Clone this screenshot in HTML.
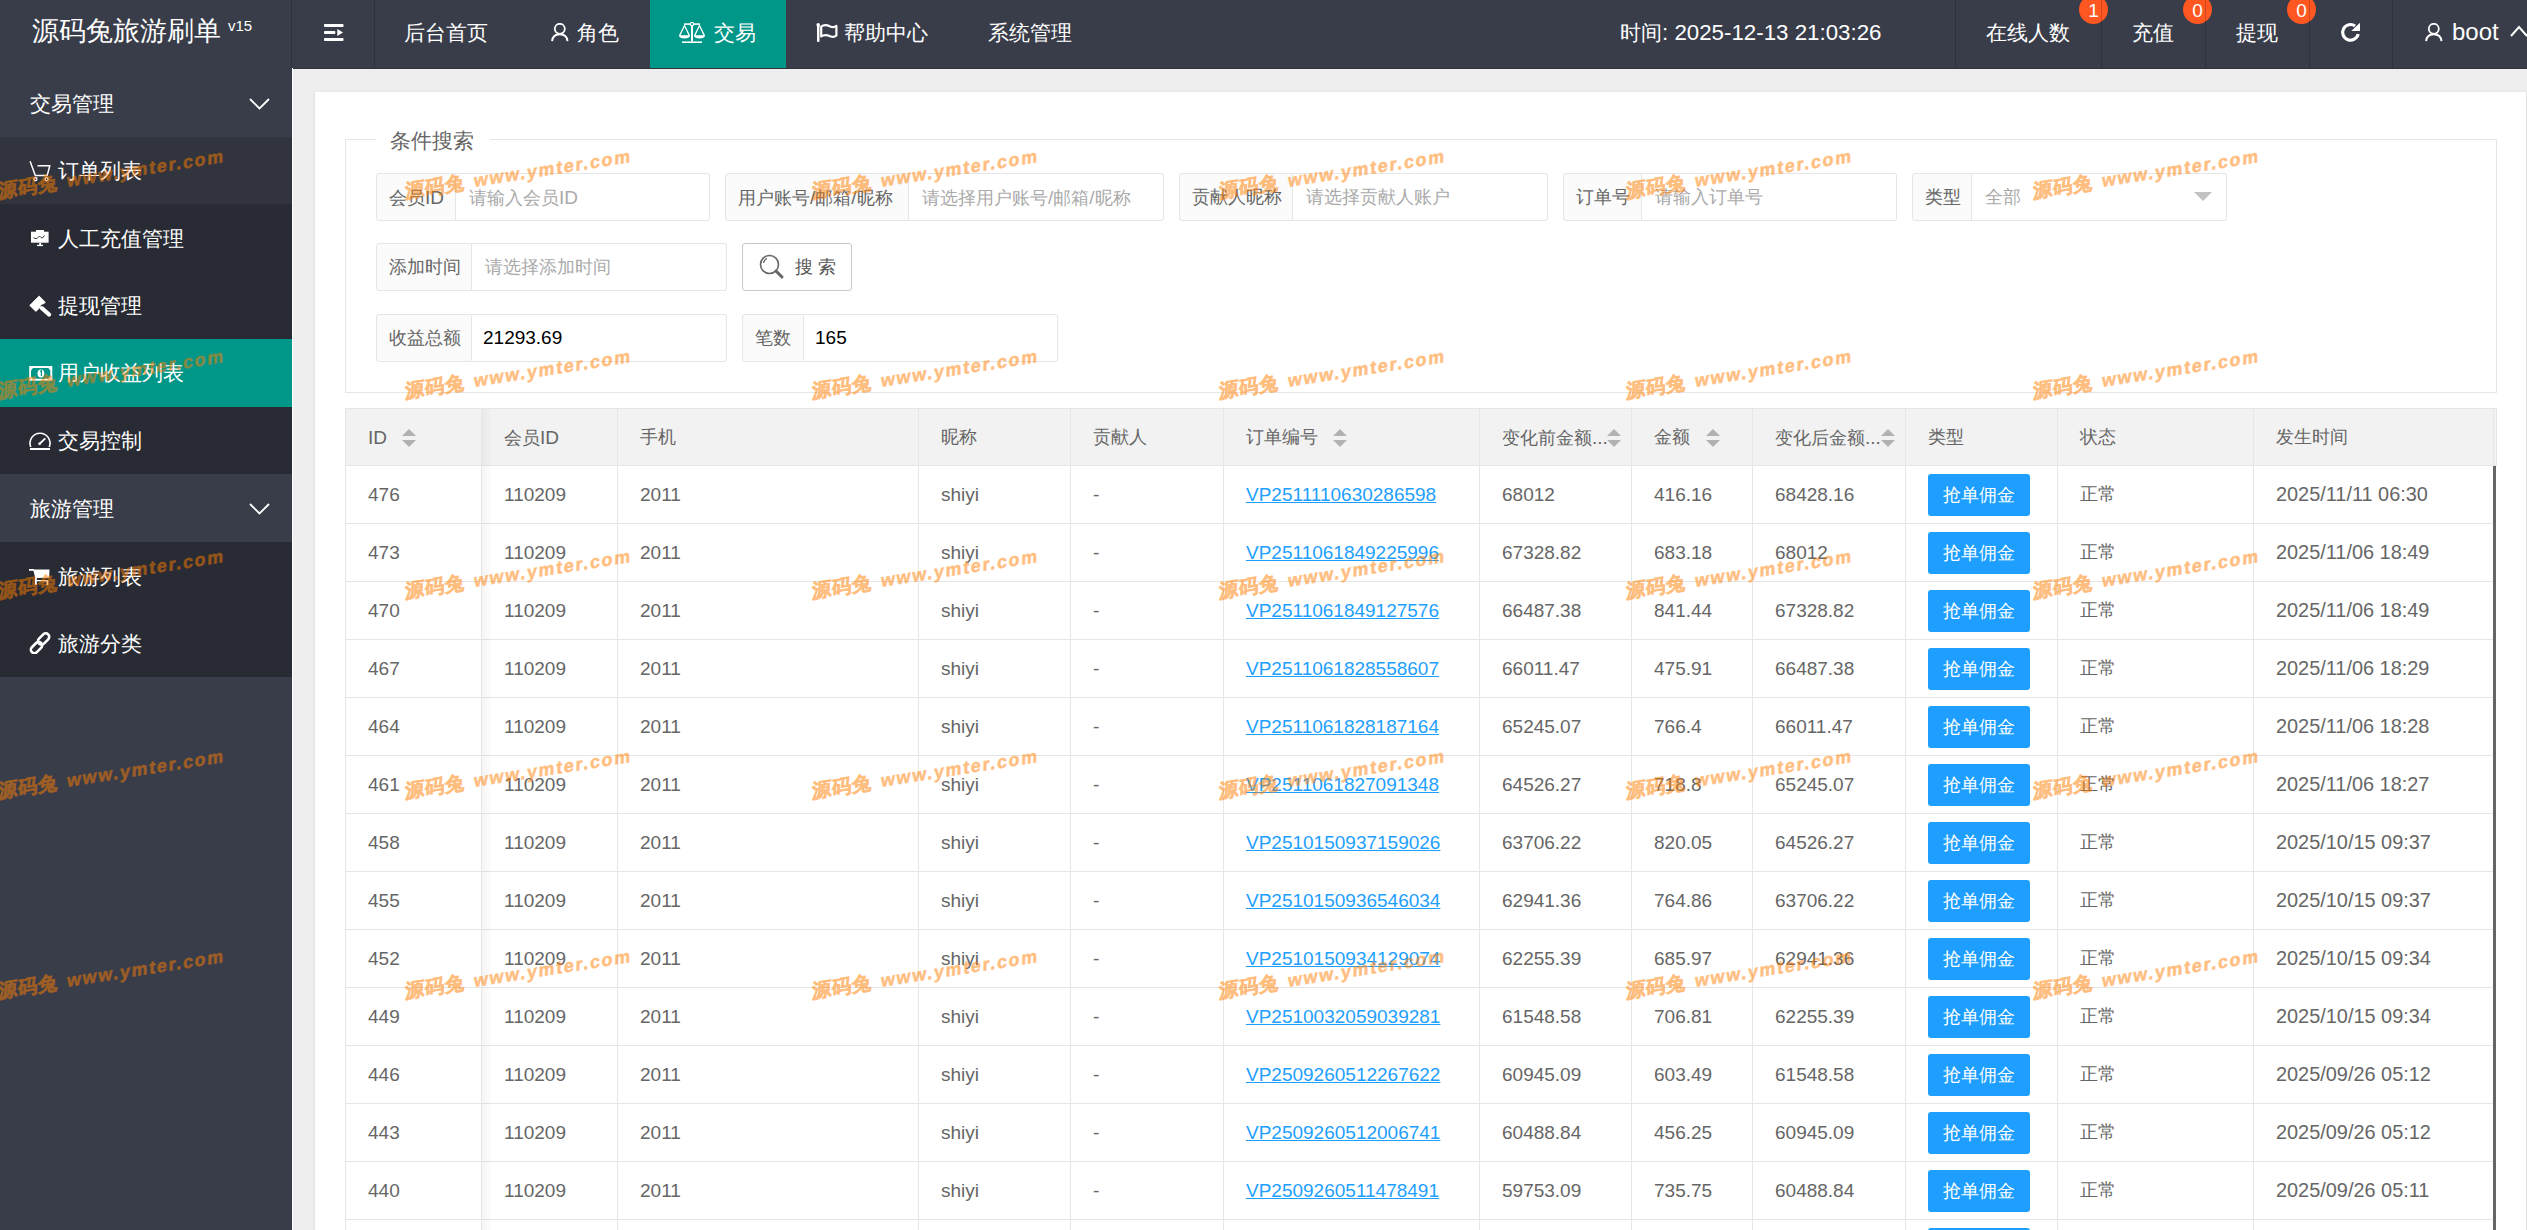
<!DOCTYPE html><html><head><meta charset="utf-8"><title>源码兔旅游刷单</title><style>

*{margin:0;padding:0;box-sizing:border-box}
html,body{width:2527px;height:1230px;overflow:hidden;background:#eeeeee;font-family:"Liberation Sans",sans-serif;}
.abs{position:absolute}
.t{position:absolute;white-space:nowrap;line-height:1}
.hdr{position:absolute;left:0;top:0;width:2527px;height:69px;background:#393d49;}
.hdr .t{color:#fff;font-size:21px}
.vsep{position:absolute;top:0;width:1px;height:68px;background:rgba(0,0,0,0.18);z-index:2}
.side{position:absolute;left:0;top:68px;width:292px;height:1162px;background:#393d49}
.side .t{color:#fff;font-size:21px}
.main{position:absolute;left:292px;top:68px;width:2235px;height:1162px;background:#eeeeee}
.card{position:absolute;left:315px;top:92px;width:2212px;height:1138px;background:#fff;box-shadow:-1px 0 3px rgba(0,0,0,0.06)}
.lbl{position:absolute;background:#fbfbfb;border:1px solid #e6e6e6;border-radius:3px 0 0 3px}
.inp{position:absolute;background:#fff;border:1px solid #e6e6e6;border-left:none;border-radius:0 3px 3px 0}
.ft{position:absolute;white-space:nowrap;line-height:1;font-size:18px}
.hl{position:absolute;height:1px;background:#e6e6e6}
.vl{position:absolute;width:1px;background:#e6e6e6}
.cell{position:absolute;white-space:nowrap;line-height:1;font-size:18px;color:#666}
.lnk{color:#1e9fff;text-decoration:underline}
.btn{position:absolute;width:102px;height:42px;background:#1e9fff;border-radius:3px;color:#fff;font-size:18px;line-height:42px;text-align:center}
.badge{position:absolute;width:29px;height:29px;border-radius:50%;background:#ff5722;color:#fff;font-size:19px;line-height:31px;text-align:center}
.wm{position:absolute;white-space:nowrap;line-height:1;color:#ff7f00;opacity:0.5;font-weight:bold;-webkit-text-stroke:0.5px #ff7f00;transform-origin:0 100%;pointer-events:none}

</style></head><body>
<div class="hdr">
<div class="t" style="left:32px;top:18px;font-size:27px">源码兔旅游刷单</div>
<div class="t" style="left:228px;top:17.5px;font-size:15px">v15</div>
<div class="vsep" style="left:291px"></div>
<svg class="abs" style="left:324px;top:24px" width="20" height="18" viewBox="0 0 20 18"><rect x="0" y="0" width="19.5" height="3" rx="0.8" fill="#fff"/><rect x="0" y="7" width="11.3" height="3" rx="0.8" fill="#fff"/><path d="M13.3 5 L19 8.5 L13.3 12Z" fill="#fff"/><rect x="0" y="14" width="19.5" height="3" rx="0.8" fill="#fff"/></svg>
<div class="vsep" style="left:374px"></div>
<div class="t" style="left:404px;top:22px">后台首页</div>
<svg class="abs" style="left:551px;top:23px" width="18" height="20" viewBox="0 0 18 20"><circle cx="8.8" cy="5.8" r="5" fill="none" stroke="#fff" stroke-width="1.8"/><path d="M1.1 18.2 C1.5 13.8 4.6 11.3 8.8 11.3 C13 11.3 16.1 13.8 16.5 18.2" fill="none" stroke="#fff" stroke-width="1.9"/></svg>
<div class="t" style="left:577px;top:22px">角色</div>
<div class="abs" style="left:650px;top:0;width:136px;height:68px;background:#009688"></div>
<svg class="abs" style="left:678px;top:22px" width="28" height="22" viewBox="0 0 28 22"><rect x="6" y="1.3" width="16" height="1.6" fill="#fff"/><rect x="13" y="3" width="2" height="16.5" fill="#fff"/><circle cx="14" cy="2.1" r="1.7" fill="#009688" stroke="#fff" stroke-width="1.2"/><rect x="4" y="19.4" width="20" height="1.6" fill="#fff"/><path d="M6.5 3.5 L1.6 13.6 M6.5 3.5 L11.4 13.6 M21.5 3.5 L16.6 13.6 M21.5 3.5 L26.4 13.6" stroke="#fff" stroke-width="1.3" fill="none"/><path d="M0.8 13.3 H12.2 C11.8 15.6 9.8 16.6 6.5 16.6 C3.2 16.6 1.2 15.6 0.8 13.3Z" fill="#fff"/><path d="M15.8 13.3 H27.2 C26.8 15.6 24.8 16.6 21.5 16.6 C18.2 16.6 16.2 15.6 15.8 13.3Z" fill="#fff"/></svg>
<div class="t" style="left:714px;top:22px">交易</div>
<svg class="abs" style="left:815px;top:22px" width="24" height="22" viewBox="0 0 24 22"><rect x="2" y="2.5" width="2.5" height="17.5" rx="1" fill="#fff"/><circle cx="3.2" cy="2.9" r="1.8" fill="#fff"/><path d="M6.2 4.6 C9 2.4 12.5 3.2 15.2 4.4 C17.6 5.5 19.8 5.2 21.4 3.9 V13.5 C19.8 14.9 17.6 15.3 15.2 14.2 C12.5 13 9 12.3 6.2 14.4 Z" fill="none" stroke="#fff" stroke-width="2.2" stroke-linejoin="round"/></svg>
<div class="t" style="left:844px;top:22px">帮助中心</div>
<div class="t" style="left:988px;top:22px">系统管理</div>
<div class="t" style="left:1620px;top:22px">时间<span style="font-size:22.3px">: 2025-12-13 21:03:26</span></div>
<div class="vsep" style="left:1955px"></div>
<div class="t" style="left:1986px;top:22px">在线人数</div>
<div class="badge" style="left:2079px;top:-5px">1</div>
<div class="vsep" style="left:2101px"></div>
<div class="t" style="left:2132px;top:22px">充值</div>
<div class="badge" style="left:2183px;top:-5px">0</div>
<div class="vsep" style="left:2205px"></div>
<div class="t" style="left:2236px;top:22px">提现</div>
<div class="badge" style="left:2287px;top:-5px">0</div>
<div class="vsep" style="left:2309px"></div>
<svg class="abs" style="left:2340px;top:22px" width="22" height="21" viewBox="0 0 22 21"><path d="M15.11 4.0 A7.85 7.85 0 1 0 18.18 11.98" fill="none" stroke="#fff" stroke-width="3.1"/><path d="M20 0.8 V8.9 H11.3Z" fill="#fff"/></svg>
<div class="vsep" style="left:2392px"></div>
<svg class="abs" style="left:2425px;top:23px" width="18" height="20" viewBox="0 0 18 20"><circle cx="8.8" cy="5.8" r="5" fill="none" stroke="#fff" stroke-width="1.8"/><path d="M1.1 18.2 C1.5 13.8 4.6 11.3 8.8 11.3 C13 11.3 16.1 13.8 16.5 18.2" fill="none" stroke="#fff" stroke-width="1.9"/></svg>
<div class="t" style="left:2452px;top:20px;font-size:24px">boot</div>
<svg class="abs" style="left:2510px;top:24px" width="20" height="14" viewBox="0 0 20 14"><path d="M1 12 L9 3 L17 12" fill="none" stroke="#fff" stroke-width="2"/></svg>
<div class="abs" style="left:0;top:68px;width:2527px;height:1px;background:#30333c"></div>
</div>
<div class="side"></div>
<div class="abs" style="left:0;top:137px;width:292px;height:203px;background:#282b33"></div>
<div class="abs" style="left:0;top:137px;width:292px;height:67px;background:#31343c"></div>
<div class="abs" style="left:0;top:339px;width:292px;height:68px;background:#009688"></div>
<div class="abs" style="left:0;top:407px;width:292px;height:67px;background:#282b33"></div>
<div class="abs" style="left:0;top:542px;width:292px;height:135px;background:#282b33"></div>
<div class="t" style="left:30px;top:93px;color:#fff;font-size:21px">交易管理</div>
<svg class="abs" style="left:249px;top:98px" width="21" height="12" viewBox="0 0 21 12"><path d="M1 1 L10.5 10.5 L20 1" fill="none" stroke="#fff" stroke-width="1.8"/></svg>
<div class="t" style="left:30px;top:498px;color:#fff;font-size:21px">旅游管理</div>
<svg class="abs" style="left:249px;top:503px" width="21" height="12" viewBox="0 0 21 12"><path d="M1 1 L10.5 10.5 L20 1" fill="none" stroke="#fff" stroke-width="1.8"/></svg>
<div class="t" style="left:58px;top:160px;color:#fff;font-size:21px">订单列表</div>
<div class="t" style="left:58px;top:228px;color:#fff;font-size:21px">人工充值管理</div>
<div class="t" style="left:58px;top:295px;color:#fff;font-size:21px">提现管理</div>
<div class="t" style="left:58px;top:362px;color:#fff;font-size:21px">用户收益列表</div>
<div class="t" style="left:58px;top:430px;color:#fff;font-size:21px">交易控制</div>
<div class="t" style="left:58px;top:566px;color:#fff;font-size:21px">旅游列表</div>
<div class="t" style="left:58px;top:633px;color:#fff;font-size:21px">旅游分类</div>
<svg class="abs" style="left:29px;top:159px" width="23" height="24" viewBox="0 0 23 24"><path d="M1.1 2.3 L6.3 16.4 H18.2 L20.8 6.8 H8.5" fill="none" stroke="#fff" stroke-width="1.5" stroke-linejoin="round"/><circle cx="6.5" cy="20.2" r="1.5" fill="none" stroke="#fff" stroke-width="1.3"/><circle cx="17.6" cy="20.2" r="1.5" fill="none" stroke="#fff" stroke-width="1.3"/></svg>
<svg class="abs" style="left:30px;top:229px" width="20" height="18" viewBox="0 0 20 18"><rect x="6" y="1" width="8" height="2" fill="#fff"/><rect x="1" y="2.7" width="17.6" height="11" fill="#fff"/><polyline points="3.5,8.5 5,9.5 7,9.5 9.5,7 11,8.5 12.5,9 14.5,6.5" fill="none" stroke="#282b33" stroke-width="0.9"/><rect x="9.2" y="13.7" width="1.9" height="2.3" fill="#fff"/><rect x="7" y="15.8" width="6" height="1.3" fill="#fff"/></svg>
<svg class="abs" style="left:29px;top:295px" width="23" height="22" viewBox="0 0 23 22"><path d="M0.7 10.4 L10.1 1 L16.3 7.2 L14.5 9 L13 9 L11.2 10.8 L11.2 12.3 L6.9 16.4Z" fill="#fff" stroke="#fff" stroke-width="0.8" stroke-linejoin="round"/><path d="M13 13.2 L20 19.5" stroke="#fff" stroke-width="4.2" stroke-linecap="round"/></svg>
<svg class="abs" style="left:29px;top:366px" width="24" height="15" viewBox="0 0 24 15"><rect x="0.2" y="0" width="23.1" height="14.7" fill="#fff"/><polygon points="4,1.9 19.3,1.9 21.3,4.5 21.3,10.2 19.3,12.8 4,12.8 2,10.2 2,4.5" fill="#009688"/><ellipse cx="11.9" cy="7.4" rx="3.4" ry="4" fill="#fff"/><path d="M11 5.6 L12.4 4.8 V10" stroke="#009688" stroke-width="1.2" fill="none"/></svg>
<svg class="abs" style="left:29px;top:431px" width="22" height="20" viewBox="0 0 22 20"><path d="M1.75 16 A10 10 0 1 1 20.25 16" fill="none" stroke="#fff" stroke-width="1.6"/><rect x="1" y="17" width="20" height="2" fill="#fff"/><path d="M10.6 12.75 L15.8 7.8" stroke="#fff" stroke-width="1.8" stroke-linecap="round"/><circle cx="10.6" cy="12.75" r="1.3" fill="#fff"/></svg>
<svg class="abs" style="left:28px;top:568px" width="23" height="19" viewBox="0 0 23 19"><rect x="1" y="1" width="5" height="1.8" fill="#fff"/><polygon points="5.2,1.5 21.5,1.5 21.2,9.8 7.2,10" fill="#fff"/><rect x="8" y="12" width="12" height="1.3" fill="#fff"/><rect x="7" y="9" width="1.8" height="8" fill="#fff"/><rect x="18.5" y="12.5" width="1.8" height="4.5" fill="#fff"/></svg>
<svg class="abs" style="left:29px;top:632px" width="22" height="22" viewBox="0 0 22 22"><rect x="8.1" y="3.5" width="13" height="7" rx="3.5" transform="rotate(-45 14.6 7)" fill="none" stroke="#fff" stroke-width="2.6"/><rect x="1" y="12.1" width="13" height="7" rx="3.5" transform="rotate(-45 7.5 15.6)" fill="none" stroke="#fff" stroke-width="2.6"/></svg>
<div class="abs" style="left:292px;top:68px;width:1px;height:1162px;background:#fff"></div>
<div class="card"></div>
<div class="abs" style="left:2526px;top:92px;width:1px;height:1138px;background:#e2e2e2"></div>
<div class="abs" style="left:345px;top:139px;width:2152px;height:254px;border:1px solid #e6e6e6"></div>
<div class="abs" style="left:376px;top:130px;width:114px;height:20px;background:#fff"></div>
<div class="t" style="left:390px;top:130px;font-size:21px;color:#666">条件搜索</div>
<div class="lbl" style="left:376px;top:173px;width:80px;height:48px"></div>
<div class="inp" style="left:456px;top:173px;width:254px;height:48px"></div>
<div class="ft" style="left:389px;top:188px;color:#666">会员<span style="font-size:19px">ID</span></div>
<div class="ft" style="left:469px;top:188px;color:#aaa">请输入会员<span style="font-size:19px">ID</span></div>
<div class="lbl" style="left:725px;top:173px;width:184px;height:48px"></div>
<div class="inp" style="left:909px;top:173px;width:255px;height:48px"></div>
<div class="ft" style="left:738px;top:188px;color:#666">用户账号<span style="font-size:19px">/</span>邮箱<span style="font-size:19px">/</span>昵称</div>
<div class="ft" style="left:922px;top:188px;color:#aaa">请选择用户账号<span style="font-size:19px">/</span>邮箱<span style="font-size:19px">/</span>昵称</div>
<div class="lbl" style="left:1179px;top:173px;width:114px;height:48px"></div>
<div class="inp" style="left:1293px;top:173px;width:255px;height:48px"></div>
<div class="ft" style="left:1192px;top:188px;color:#666">贡献人昵称</div>
<div class="ft" style="left:1306px;top:188px;color:#aaa">请选择贡献人账户</div>
<div class="lbl" style="left:1563px;top:173px;width:79px;height:48px"></div>
<div class="inp" style="left:1642px;top:173px;width:255px;height:48px"></div>
<div class="ft" style="left:1576px;top:188px;color:#666">订单号</div>
<div class="ft" style="left:1655px;top:188px;color:#aaa">请输入订单号</div>
<div class="lbl" style="left:1912px;top:173px;width:60px;height:48px"></div>
<div class="inp" style="left:1972px;top:173px;width:255px;height:48px"></div>
<div class="ft" style="left:1925px;top:188px;color:#666">类型</div>
<div class="ft" style="left:1985px;top:188px;color:#aaa">全部</div>
<svg class="abs" style="left:2194px;top:192px" width="18" height="9" viewBox="0 0 18 9"><path d="M0 0 H18 L9 9Z" fill="#c2c2c2"/></svg>
<div class="lbl" style="left:376px;top:243px;width:96px;height:48px"></div>
<div class="inp" style="left:472px;top:243px;width:255px;height:48px"></div>
<div class="ft" style="left:389px;top:258px;color:#666">添加时间</div>
<div class="ft" style="left:485px;top:258px;color:#aaa">请选择添加时间</div>
<div class="abs" style="left:742px;top:243px;width:110px;height:48px;border:1px solid #c9c9c9;border-radius:3px;background:#fff"></div>
<svg class="abs" style="left:759px;top:254px" width="26" height="26" viewBox="0 0 26 26"><circle cx="10.5" cy="10.5" r="9" fill="none" stroke="#666" stroke-width="1.6"/><path d="M4.5 9 A6 6 0 0 1 8 4.5" fill="none" stroke="#666" stroke-width="1.3"/><path d="M17 17 L23 23" stroke="#666" stroke-width="3" stroke-linecap="round"/></svg>
<div class="ft" style="left:795px;top:258px;color:#555">搜 索</div>
<div class="lbl" style="left:376px;top:314px;width:96px;height:48px"></div>
<div class="inp" style="left:472px;top:314px;width:255px;height:48px"></div>
<div class="ft" style="left:389px;top:329px;color:#666">收益总额</div>
<div class="ft" style="left:483px;top:328px;color:#000"><span style="font-size:19px">21293.69</span></div>
<div class="lbl" style="left:742px;top:314px;width:62px;height:48px"></div>
<div class="inp" style="left:804px;top:314px;width:254px;height:48px"></div>
<div class="ft" style="left:755px;top:329px;color:#666">笔数</div>
<div class="ft" style="left:815px;top:328px;color:#000"><span style="font-size:19px">165</span></div>
<div class="abs" style="left:346px;top:409px;width:2150px;height:56px;background:#f2f2f2"></div>
<div class="hl" style="left:345px;top:408px;width:2152px"></div>
<div class="hl" style="left:345px;top:465px;width:2148px"></div>
<div class="hl" style="left:345px;top:523px;width:2148px"></div>
<div class="hl" style="left:345px;top:581px;width:2148px"></div>
<div class="hl" style="left:345px;top:639px;width:2148px"></div>
<div class="hl" style="left:345px;top:697px;width:2148px"></div>
<div class="hl" style="left:345px;top:755px;width:2148px"></div>
<div class="hl" style="left:345px;top:813px;width:2148px"></div>
<div class="hl" style="left:345px;top:871px;width:2148px"></div>
<div class="hl" style="left:345px;top:929px;width:2148px"></div>
<div class="hl" style="left:345px;top:987px;width:2148px"></div>
<div class="hl" style="left:345px;top:1045px;width:2148px"></div>
<div class="hl" style="left:345px;top:1103px;width:2148px"></div>
<div class="hl" style="left:345px;top:1161px;width:2148px"></div>
<div class="hl" style="left:345px;top:1219px;width:2148px"></div>
<div class="hl" style="left:2493px;top:465px;width:4px"></div>
<div class="vl" style="left:345px;top:408px;height:822px"></div>
<div class="vl" style="left:481px;top:408px;height:822px"></div>
<div class="vl" style="left:617px;top:408px;height:822px"></div>
<div class="vl" style="left:918px;top:408px;height:822px"></div>
<div class="vl" style="left:1070px;top:408px;height:822px"></div>
<div class="vl" style="left:1223px;top:408px;height:822px"></div>
<div class="vl" style="left:1479px;top:408px;height:822px"></div>
<div class="vl" style="left:1631px;top:408px;height:822px"></div>
<div class="vl" style="left:1752px;top:408px;height:822px"></div>
<div class="vl" style="left:1905px;top:408px;height:822px"></div>
<div class="vl" style="left:2057px;top:408px;height:822px"></div>
<div class="vl" style="left:2253px;top:408px;height:822px"></div>
<div class="vl" style="left:2493px;top:408px;height:822px"></div>
<div class="vl" style="left:2496px;top:408px;height:58px"></div>
<div class="abs" style="left:482px;top:409px;width:11px;height:821px;background:linear-gradient(to right,rgba(0,0,0,0.04),rgba(0,0,0,0))"></div>
<div class="abs" style="left:2493px;top:466px;width:3px;height:764px;background:#666"></div>
<div class="cell" style="left:368px;top:428px"><span style="font-size:19px">ID</span></div>
<div class="cell" style="left:504px;top:428px">会员<span style="font-size:19px">ID</span></div>
<div class="cell" style="left:640px;top:428px">手机</div>
<div class="cell" style="left:941px;top:428px">昵称</div>
<div class="cell" style="left:1093px;top:428px">贡献人</div>
<div class="cell" style="left:1246px;top:428px">订单编号</div>
<div class="cell" style="left:1502px;top:428px">变化前金额<span style="font-size:19px">...</span></div>
<div class="cell" style="left:1654px;top:428px">金额</div>
<div class="cell" style="left:1775px;top:428px">变化后金额<span style="font-size:19px">...</span></div>
<div class="cell" style="left:1928px;top:428px">类型</div>
<div class="cell" style="left:2080px;top:428px">状态</div>
<div class="cell" style="left:2276px;top:428px">发生时间</div>
<svg class="abs" style="left:402px;top:429px" width="14" height="18" viewBox="0 0 14 18"><path d="M7 0 L14 7 H0Z" fill="#b2b2b2"/><path d="M0 11 H14 L7 18Z" fill="#b2b2b2"/></svg>
<svg class="abs" style="left:1333px;top:429px" width="14" height="18" viewBox="0 0 14 18"><path d="M7 0 L14 7 H0Z" fill="#b2b2b2"/><path d="M0 11 H14 L7 18Z" fill="#b2b2b2"/></svg>
<svg class="abs" style="left:1607px;top:429px" width="14" height="18" viewBox="0 0 14 18"><path d="M7 0 L14 7 H0Z" fill="#b2b2b2"/><path d="M0 11 H14 L7 18Z" fill="#b2b2b2"/></svg>
<svg class="abs" style="left:1706px;top:429px" width="14" height="18" viewBox="0 0 14 18"><path d="M7 0 L14 7 H0Z" fill="#b2b2b2"/><path d="M0 11 H14 L7 18Z" fill="#b2b2b2"/></svg>
<svg class="abs" style="left:1881px;top:429px" width="14" height="18" viewBox="0 0 14 18"><path d="M7 0 L14 7 H0Z" fill="#b2b2b2"/><path d="M0 11 H14 L7 18Z" fill="#b2b2b2"/></svg>
<div class="cell" style="left:368px;top:485px"><span style="font-size:19px">476</span></div>
<div class="cell" style="left:504px;top:485px"><span style="font-size:19px">110209</span></div>
<div class="cell" style="left:640px;top:485px"><span style="font-size:19px">2011</span></div>
<div class="cell" style="left:941px;top:485px"><span style="font-size:19px">shiyi</span></div>
<div class="cell" style="left:1093px;top:485px"><span style="font-size:19px">-</span></div>
<div class="cell" style="left:1246px;top:485px"><span class="lnk"><span style="font-size:19px">VP2511110630286598</span></span></div>
<div class="cell" style="left:1502px;top:485px"><span style="font-size:19px">68012</span></div>
<div class="cell" style="left:1654px;top:485px"><span style="font-size:19px">416.16</span></div>
<div class="cell" style="left:1775px;top:485px"><span style="font-size:19px">68428.16</span></div>
<div class="cell" style="left:2080px;top:485px">正常</div>
<div class="cell" style="left:2276px;top:485px"><span style="font-size:19.9px">2025/11/11 06:30</span></div>
<div class="btn" style="left:1928px;top:474px">抢单佣金</div>
<div class="cell" style="left:368px;top:543px"><span style="font-size:19px">473</span></div>
<div class="cell" style="left:504px;top:543px"><span style="font-size:19px">110209</span></div>
<div class="cell" style="left:640px;top:543px"><span style="font-size:19px">2011</span></div>
<div class="cell" style="left:941px;top:543px"><span style="font-size:19px">shiyi</span></div>
<div class="cell" style="left:1093px;top:543px"><span style="font-size:19px">-</span></div>
<div class="cell" style="left:1246px;top:543px"><span class="lnk"><span style="font-size:19px">VP2511061849225996</span></span></div>
<div class="cell" style="left:1502px;top:543px"><span style="font-size:19px">67328.82</span></div>
<div class="cell" style="left:1654px;top:543px"><span style="font-size:19px">683.18</span></div>
<div class="cell" style="left:1775px;top:543px"><span style="font-size:19px">68012</span></div>
<div class="cell" style="left:2080px;top:543px">正常</div>
<div class="cell" style="left:2276px;top:543px"><span style="font-size:19.9px">2025/11/06 18:49</span></div>
<div class="btn" style="left:1928px;top:532px">抢单佣金</div>
<div class="cell" style="left:368px;top:601px"><span style="font-size:19px">470</span></div>
<div class="cell" style="left:504px;top:601px"><span style="font-size:19px">110209</span></div>
<div class="cell" style="left:640px;top:601px"><span style="font-size:19px">2011</span></div>
<div class="cell" style="left:941px;top:601px"><span style="font-size:19px">shiyi</span></div>
<div class="cell" style="left:1093px;top:601px"><span style="font-size:19px">-</span></div>
<div class="cell" style="left:1246px;top:601px"><span class="lnk"><span style="font-size:19px">VP2511061849127576</span></span></div>
<div class="cell" style="left:1502px;top:601px"><span style="font-size:19px">66487.38</span></div>
<div class="cell" style="left:1654px;top:601px"><span style="font-size:19px">841.44</span></div>
<div class="cell" style="left:1775px;top:601px"><span style="font-size:19px">67328.82</span></div>
<div class="cell" style="left:2080px;top:601px">正常</div>
<div class="cell" style="left:2276px;top:601px"><span style="font-size:19.9px">2025/11/06 18:49</span></div>
<div class="btn" style="left:1928px;top:590px">抢单佣金</div>
<div class="cell" style="left:368px;top:659px"><span style="font-size:19px">467</span></div>
<div class="cell" style="left:504px;top:659px"><span style="font-size:19px">110209</span></div>
<div class="cell" style="left:640px;top:659px"><span style="font-size:19px">2011</span></div>
<div class="cell" style="left:941px;top:659px"><span style="font-size:19px">shiyi</span></div>
<div class="cell" style="left:1093px;top:659px"><span style="font-size:19px">-</span></div>
<div class="cell" style="left:1246px;top:659px"><span class="lnk"><span style="font-size:19px">VP2511061828558607</span></span></div>
<div class="cell" style="left:1502px;top:659px"><span style="font-size:19px">66011.47</span></div>
<div class="cell" style="left:1654px;top:659px"><span style="font-size:19px">475.91</span></div>
<div class="cell" style="left:1775px;top:659px"><span style="font-size:19px">66487.38</span></div>
<div class="cell" style="left:2080px;top:659px">正常</div>
<div class="cell" style="left:2276px;top:659px"><span style="font-size:19.9px">2025/11/06 18:29</span></div>
<div class="btn" style="left:1928px;top:648px">抢单佣金</div>
<div class="cell" style="left:368px;top:717px"><span style="font-size:19px">464</span></div>
<div class="cell" style="left:504px;top:717px"><span style="font-size:19px">110209</span></div>
<div class="cell" style="left:640px;top:717px"><span style="font-size:19px">2011</span></div>
<div class="cell" style="left:941px;top:717px"><span style="font-size:19px">shiyi</span></div>
<div class="cell" style="left:1093px;top:717px"><span style="font-size:19px">-</span></div>
<div class="cell" style="left:1246px;top:717px"><span class="lnk"><span style="font-size:19px">VP2511061828187164</span></span></div>
<div class="cell" style="left:1502px;top:717px"><span style="font-size:19px">65245.07</span></div>
<div class="cell" style="left:1654px;top:717px"><span style="font-size:19px">766.4</span></div>
<div class="cell" style="left:1775px;top:717px"><span style="font-size:19px">66011.47</span></div>
<div class="cell" style="left:2080px;top:717px">正常</div>
<div class="cell" style="left:2276px;top:717px"><span style="font-size:19.9px">2025/11/06 18:28</span></div>
<div class="btn" style="left:1928px;top:706px">抢单佣金</div>
<div class="cell" style="left:368px;top:775px"><span style="font-size:19px">461</span></div>
<div class="cell" style="left:504px;top:775px"><span style="font-size:19px">110209</span></div>
<div class="cell" style="left:640px;top:775px"><span style="font-size:19px">2011</span></div>
<div class="cell" style="left:941px;top:775px"><span style="font-size:19px">shiyi</span></div>
<div class="cell" style="left:1093px;top:775px"><span style="font-size:19px">-</span></div>
<div class="cell" style="left:1246px;top:775px"><span class="lnk"><span style="font-size:19px">VP2511061827091348</span></span></div>
<div class="cell" style="left:1502px;top:775px"><span style="font-size:19px">64526.27</span></div>
<div class="cell" style="left:1654px;top:775px"><span style="font-size:19px">718.8</span></div>
<div class="cell" style="left:1775px;top:775px"><span style="font-size:19px">65245.07</span></div>
<div class="cell" style="left:2080px;top:775px">正常</div>
<div class="cell" style="left:2276px;top:775px"><span style="font-size:19.9px">2025/11/06 18:27</span></div>
<div class="btn" style="left:1928px;top:764px">抢单佣金</div>
<div class="cell" style="left:368px;top:833px"><span style="font-size:19px">458</span></div>
<div class="cell" style="left:504px;top:833px"><span style="font-size:19px">110209</span></div>
<div class="cell" style="left:640px;top:833px"><span style="font-size:19px">2011</span></div>
<div class="cell" style="left:941px;top:833px"><span style="font-size:19px">shiyi</span></div>
<div class="cell" style="left:1093px;top:833px"><span style="font-size:19px">-</span></div>
<div class="cell" style="left:1246px;top:833px"><span class="lnk"><span style="font-size:19px">VP2510150937159026</span></span></div>
<div class="cell" style="left:1502px;top:833px"><span style="font-size:19px">63706.22</span></div>
<div class="cell" style="left:1654px;top:833px"><span style="font-size:19px">820.05</span></div>
<div class="cell" style="left:1775px;top:833px"><span style="font-size:19px">64526.27</span></div>
<div class="cell" style="left:2080px;top:833px">正常</div>
<div class="cell" style="left:2276px;top:833px"><span style="font-size:19.9px">2025/10/15 09:37</span></div>
<div class="btn" style="left:1928px;top:822px">抢单佣金</div>
<div class="cell" style="left:368px;top:891px"><span style="font-size:19px">455</span></div>
<div class="cell" style="left:504px;top:891px"><span style="font-size:19px">110209</span></div>
<div class="cell" style="left:640px;top:891px"><span style="font-size:19px">2011</span></div>
<div class="cell" style="left:941px;top:891px"><span style="font-size:19px">shiyi</span></div>
<div class="cell" style="left:1093px;top:891px"><span style="font-size:19px">-</span></div>
<div class="cell" style="left:1246px;top:891px"><span class="lnk"><span style="font-size:19px">VP2510150936546034</span></span></div>
<div class="cell" style="left:1502px;top:891px"><span style="font-size:19px">62941.36</span></div>
<div class="cell" style="left:1654px;top:891px"><span style="font-size:19px">764.86</span></div>
<div class="cell" style="left:1775px;top:891px"><span style="font-size:19px">63706.22</span></div>
<div class="cell" style="left:2080px;top:891px">正常</div>
<div class="cell" style="left:2276px;top:891px"><span style="font-size:19.9px">2025/10/15 09:37</span></div>
<div class="btn" style="left:1928px;top:880px">抢单佣金</div>
<div class="cell" style="left:368px;top:949px"><span style="font-size:19px">452</span></div>
<div class="cell" style="left:504px;top:949px"><span style="font-size:19px">110209</span></div>
<div class="cell" style="left:640px;top:949px"><span style="font-size:19px">2011</span></div>
<div class="cell" style="left:941px;top:949px"><span style="font-size:19px">shiyi</span></div>
<div class="cell" style="left:1093px;top:949px"><span style="font-size:19px">-</span></div>
<div class="cell" style="left:1246px;top:949px"><span class="lnk"><span style="font-size:19px">VP2510150934129074</span></span></div>
<div class="cell" style="left:1502px;top:949px"><span style="font-size:19px">62255.39</span></div>
<div class="cell" style="left:1654px;top:949px"><span style="font-size:19px">685.97</span></div>
<div class="cell" style="left:1775px;top:949px"><span style="font-size:19px">62941.36</span></div>
<div class="cell" style="left:2080px;top:949px">正常</div>
<div class="cell" style="left:2276px;top:949px"><span style="font-size:19.9px">2025/10/15 09:34</span></div>
<div class="btn" style="left:1928px;top:938px">抢单佣金</div>
<div class="cell" style="left:368px;top:1007px"><span style="font-size:19px">449</span></div>
<div class="cell" style="left:504px;top:1007px"><span style="font-size:19px">110209</span></div>
<div class="cell" style="left:640px;top:1007px"><span style="font-size:19px">2011</span></div>
<div class="cell" style="left:941px;top:1007px"><span style="font-size:19px">shiyi</span></div>
<div class="cell" style="left:1093px;top:1007px"><span style="font-size:19px">-</span></div>
<div class="cell" style="left:1246px;top:1007px"><span class="lnk"><span style="font-size:19px">VP2510032059039281</span></span></div>
<div class="cell" style="left:1502px;top:1007px"><span style="font-size:19px">61548.58</span></div>
<div class="cell" style="left:1654px;top:1007px"><span style="font-size:19px">706.81</span></div>
<div class="cell" style="left:1775px;top:1007px"><span style="font-size:19px">62255.39</span></div>
<div class="cell" style="left:2080px;top:1007px">正常</div>
<div class="cell" style="left:2276px;top:1007px"><span style="font-size:19.9px">2025/10/15 09:34</span></div>
<div class="btn" style="left:1928px;top:996px">抢单佣金</div>
<div class="cell" style="left:368px;top:1065px"><span style="font-size:19px">446</span></div>
<div class="cell" style="left:504px;top:1065px"><span style="font-size:19px">110209</span></div>
<div class="cell" style="left:640px;top:1065px"><span style="font-size:19px">2011</span></div>
<div class="cell" style="left:941px;top:1065px"><span style="font-size:19px">shiyi</span></div>
<div class="cell" style="left:1093px;top:1065px"><span style="font-size:19px">-</span></div>
<div class="cell" style="left:1246px;top:1065px"><span class="lnk"><span style="font-size:19px">VP2509260512267622</span></span></div>
<div class="cell" style="left:1502px;top:1065px"><span style="font-size:19px">60945.09</span></div>
<div class="cell" style="left:1654px;top:1065px"><span style="font-size:19px">603.49</span></div>
<div class="cell" style="left:1775px;top:1065px"><span style="font-size:19px">61548.58</span></div>
<div class="cell" style="left:2080px;top:1065px">正常</div>
<div class="cell" style="left:2276px;top:1065px"><span style="font-size:19.9px">2025/09/26 05:12</span></div>
<div class="btn" style="left:1928px;top:1054px">抢单佣金</div>
<div class="cell" style="left:368px;top:1123px"><span style="font-size:19px">443</span></div>
<div class="cell" style="left:504px;top:1123px"><span style="font-size:19px">110209</span></div>
<div class="cell" style="left:640px;top:1123px"><span style="font-size:19px">2011</span></div>
<div class="cell" style="left:941px;top:1123px"><span style="font-size:19px">shiyi</span></div>
<div class="cell" style="left:1093px;top:1123px"><span style="font-size:19px">-</span></div>
<div class="cell" style="left:1246px;top:1123px"><span class="lnk"><span style="font-size:19px">VP2509260512006741</span></span></div>
<div class="cell" style="left:1502px;top:1123px"><span style="font-size:19px">60488.84</span></div>
<div class="cell" style="left:1654px;top:1123px"><span style="font-size:19px">456.25</span></div>
<div class="cell" style="left:1775px;top:1123px"><span style="font-size:19px">60945.09</span></div>
<div class="cell" style="left:2080px;top:1123px">正常</div>
<div class="cell" style="left:2276px;top:1123px"><span style="font-size:19.9px">2025/09/26 05:12</span></div>
<div class="btn" style="left:1928px;top:1112px">抢单佣金</div>
<div class="cell" style="left:368px;top:1181px"><span style="font-size:19px">440</span></div>
<div class="cell" style="left:504px;top:1181px"><span style="font-size:19px">110209</span></div>
<div class="cell" style="left:640px;top:1181px"><span style="font-size:19px">2011</span></div>
<div class="cell" style="left:941px;top:1181px"><span style="font-size:19px">shiyi</span></div>
<div class="cell" style="left:1093px;top:1181px"><span style="font-size:19px">-</span></div>
<div class="cell" style="left:1246px;top:1181px"><span class="lnk"><span style="font-size:19px">VP2509260511478491</span></span></div>
<div class="cell" style="left:1502px;top:1181px"><span style="font-size:19px">59753.09</span></div>
<div class="cell" style="left:1654px;top:1181px"><span style="font-size:19px">735.75</span></div>
<div class="cell" style="left:1775px;top:1181px"><span style="font-size:19px">60488.84</span></div>
<div class="cell" style="left:2080px;top:1181px">正常</div>
<div class="cell" style="left:2276px;top:1181px"><span style="font-size:19.9px">2025/09/26 05:11</span></div>
<div class="btn" style="left:1928px;top:1170px">抢单佣金</div>
<div class="btn" style="left:1928px;top:1228px">抢单佣金</div>
<div class="wm" style="left:-2px;top:182px;transform:rotate(-9deg) skewX(-10deg)"><span style="font-size:19.5px">源码兔</span><span style="font-size:18px;letter-spacing:1.8px;margin-left:3px">&nbsp;www.ymter.com</span></div>
<div class="wm" style="left:405px;top:182px;transform:rotate(-9deg) skewX(-10deg)"><span style="font-size:19.5px">源码兔</span><span style="font-size:18px;letter-spacing:1.8px;margin-left:3px">&nbsp;www.ymter.com</span></div>
<div class="wm" style="left:812px;top:182px;transform:rotate(-9deg) skewX(-10deg)"><span style="font-size:19.5px">源码兔</span><span style="font-size:18px;letter-spacing:1.8px;margin-left:3px">&nbsp;www.ymter.com</span></div>
<div class="wm" style="left:1219px;top:182px;transform:rotate(-9deg) skewX(-10deg)"><span style="font-size:19.5px">源码兔</span><span style="font-size:18px;letter-spacing:1.8px;margin-left:3px">&nbsp;www.ymter.com</span></div>
<div class="wm" style="left:1626px;top:182px;transform:rotate(-9deg) skewX(-10deg)"><span style="font-size:19.5px">源码兔</span><span style="font-size:18px;letter-spacing:1.8px;margin-left:3px">&nbsp;www.ymter.com</span></div>
<div class="wm" style="left:2033px;top:182px;transform:rotate(-9deg) skewX(-10deg)"><span style="font-size:19.5px">源码兔</span><span style="font-size:18px;letter-spacing:1.8px;margin-left:3px">&nbsp;www.ymter.com</span></div>
<div class="wm" style="left:-2px;top:382px;transform:rotate(-9deg) skewX(-10deg)"><span style="font-size:19.5px">源码兔</span><span style="font-size:18px;letter-spacing:1.8px;margin-left:3px">&nbsp;www.ymter.com</span></div>
<div class="wm" style="left:405px;top:382px;transform:rotate(-9deg) skewX(-10deg)"><span style="font-size:19.5px">源码兔</span><span style="font-size:18px;letter-spacing:1.8px;margin-left:3px">&nbsp;www.ymter.com</span></div>
<div class="wm" style="left:812px;top:382px;transform:rotate(-9deg) skewX(-10deg)"><span style="font-size:19.5px">源码兔</span><span style="font-size:18px;letter-spacing:1.8px;margin-left:3px">&nbsp;www.ymter.com</span></div>
<div class="wm" style="left:1219px;top:382px;transform:rotate(-9deg) skewX(-10deg)"><span style="font-size:19.5px">源码兔</span><span style="font-size:18px;letter-spacing:1.8px;margin-left:3px">&nbsp;www.ymter.com</span></div>
<div class="wm" style="left:1626px;top:382px;transform:rotate(-9deg) skewX(-10deg)"><span style="font-size:19.5px">源码兔</span><span style="font-size:18px;letter-spacing:1.8px;margin-left:3px">&nbsp;www.ymter.com</span></div>
<div class="wm" style="left:2033px;top:382px;transform:rotate(-9deg) skewX(-10deg)"><span style="font-size:19.5px">源码兔</span><span style="font-size:18px;letter-spacing:1.8px;margin-left:3px">&nbsp;www.ymter.com</span></div>
<div class="wm" style="left:-2px;top:582px;transform:rotate(-9deg) skewX(-10deg)"><span style="font-size:19.5px">源码兔</span><span style="font-size:18px;letter-spacing:1.8px;margin-left:3px">&nbsp;www.ymter.com</span></div>
<div class="wm" style="left:405px;top:582px;transform:rotate(-9deg) skewX(-10deg)"><span style="font-size:19.5px">源码兔</span><span style="font-size:18px;letter-spacing:1.8px;margin-left:3px">&nbsp;www.ymter.com</span></div>
<div class="wm" style="left:812px;top:582px;transform:rotate(-9deg) skewX(-10deg)"><span style="font-size:19.5px">源码兔</span><span style="font-size:18px;letter-spacing:1.8px;margin-left:3px">&nbsp;www.ymter.com</span></div>
<div class="wm" style="left:1219px;top:582px;transform:rotate(-9deg) skewX(-10deg)"><span style="font-size:19.5px">源码兔</span><span style="font-size:18px;letter-spacing:1.8px;margin-left:3px">&nbsp;www.ymter.com</span></div>
<div class="wm" style="left:1626px;top:582px;transform:rotate(-9deg) skewX(-10deg)"><span style="font-size:19.5px">源码兔</span><span style="font-size:18px;letter-spacing:1.8px;margin-left:3px">&nbsp;www.ymter.com</span></div>
<div class="wm" style="left:2033px;top:582px;transform:rotate(-9deg) skewX(-10deg)"><span style="font-size:19.5px">源码兔</span><span style="font-size:18px;letter-spacing:1.8px;margin-left:3px">&nbsp;www.ymter.com</span></div>
<div class="wm" style="left:-2px;top:782px;transform:rotate(-9deg) skewX(-10deg)"><span style="font-size:19.5px">源码兔</span><span style="font-size:18px;letter-spacing:1.8px;margin-left:3px">&nbsp;www.ymter.com</span></div>
<div class="wm" style="left:405px;top:782px;transform:rotate(-9deg) skewX(-10deg)"><span style="font-size:19.5px">源码兔</span><span style="font-size:18px;letter-spacing:1.8px;margin-left:3px">&nbsp;www.ymter.com</span></div>
<div class="wm" style="left:812px;top:782px;transform:rotate(-9deg) skewX(-10deg)"><span style="font-size:19.5px">源码兔</span><span style="font-size:18px;letter-spacing:1.8px;margin-left:3px">&nbsp;www.ymter.com</span></div>
<div class="wm" style="left:1219px;top:782px;transform:rotate(-9deg) skewX(-10deg)"><span style="font-size:19.5px">源码兔</span><span style="font-size:18px;letter-spacing:1.8px;margin-left:3px">&nbsp;www.ymter.com</span></div>
<div class="wm" style="left:1626px;top:782px;transform:rotate(-9deg) skewX(-10deg)"><span style="font-size:19.5px">源码兔</span><span style="font-size:18px;letter-spacing:1.8px;margin-left:3px">&nbsp;www.ymter.com</span></div>
<div class="wm" style="left:2033px;top:782px;transform:rotate(-9deg) skewX(-10deg)"><span style="font-size:19.5px">源码兔</span><span style="font-size:18px;letter-spacing:1.8px;margin-left:3px">&nbsp;www.ymter.com</span></div>
<div class="wm" style="left:-2px;top:982px;transform:rotate(-9deg) skewX(-10deg)"><span style="font-size:19.5px">源码兔</span><span style="font-size:18px;letter-spacing:1.8px;margin-left:3px">&nbsp;www.ymter.com</span></div>
<div class="wm" style="left:405px;top:982px;transform:rotate(-9deg) skewX(-10deg)"><span style="font-size:19.5px">源码兔</span><span style="font-size:18px;letter-spacing:1.8px;margin-left:3px">&nbsp;www.ymter.com</span></div>
<div class="wm" style="left:812px;top:982px;transform:rotate(-9deg) skewX(-10deg)"><span style="font-size:19.5px">源码兔</span><span style="font-size:18px;letter-spacing:1.8px;margin-left:3px">&nbsp;www.ymter.com</span></div>
<div class="wm" style="left:1219px;top:982px;transform:rotate(-9deg) skewX(-10deg)"><span style="font-size:19.5px">源码兔</span><span style="font-size:18px;letter-spacing:1.8px;margin-left:3px">&nbsp;www.ymter.com</span></div>
<div class="wm" style="left:1626px;top:982px;transform:rotate(-9deg) skewX(-10deg)"><span style="font-size:19.5px">源码兔</span><span style="font-size:18px;letter-spacing:1.8px;margin-left:3px">&nbsp;www.ymter.com</span></div>
<div class="wm" style="left:2033px;top:982px;transform:rotate(-9deg) skewX(-10deg)"><span style="font-size:19.5px">源码兔</span><span style="font-size:18px;letter-spacing:1.8px;margin-left:3px">&nbsp;www.ymter.com</span></div>
</body></html>
